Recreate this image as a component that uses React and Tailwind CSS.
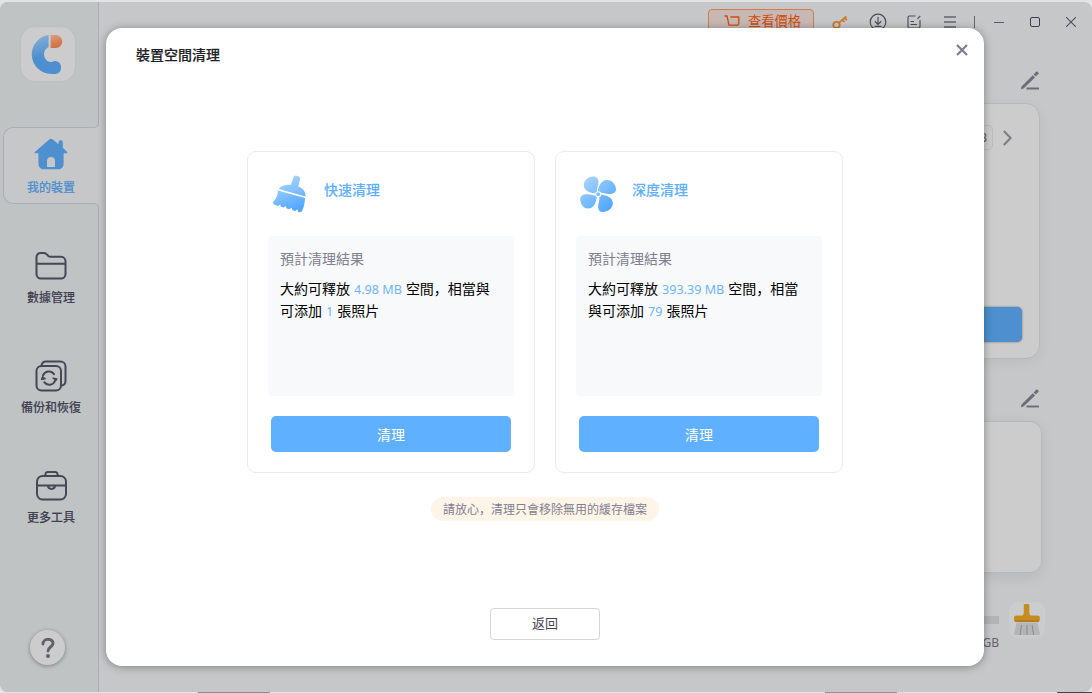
import React from 'react';

const LogoIcon = () => (
  <svg width="54" height="54" viewBox="0 0 54 54">
    <defs>
      <linearGradient id="logoBlue" x1="0" y1="0" x2="0.2" y2="1">
        <stop offset="0" stopColor="#8cb2d4" />
        <stop offset="0.6" stopColor="#4d8fcf" />
        <stop offset="1" stopColor="#4d8fcf" />
      </linearGradient>
      <linearGradient id="logoOrange" x1="0" y1="0" x2="0.3" y2="1">
        <stop offset="0" stopColor="#dc9d80" />
        <stop offset="1" stopColor="#d0703c" />
      </linearGradient>
    </defs>
    <path d="M27.6 8A19.6 19.6 0 0 0 30 47H34.6A6.6 6.6 0 0 0 34.6 34C32.5 33.6 32 35 29.5 35A7.2 7.2 0 0 1 23 27.6C23 24 25 21 27.6 20.3Z" fill="url(#logoBlue)" />
    <path d="M29.6 8H34.8A6.5 6.5 0 0 1 34.8 21H29.6Z" fill="url(#logoOrange)" />
  </svg>
);

const HomeIcon = () => (
  <svg width="34" height="32" viewBox="0 0 34 32">
    <path d="M15.2 1.5a3 3 0 0 1 3.6 0L24.6 6.3V4.4a2 2 0 0 1 4.2 0v5.4l4.4 4.1a.8.8 0 0 1-.6 1.4H29.6V26a5.2 5.2 0 0 1-5.2 5.2H9.6A5.2 5.2 0 0 1 4.4 26V15.3H1.3a.8.8 0 0 1-.5-1.4Z" fill="#4d8fcf" />
    <path d="M13 29V23a4 4 0 0 1 8 0v6Z" fill="#c6c7c9" />
  </svg>
);

const FolderIcon = () => (
  <svg width="32" height="30" viewBox="0 0 32 30" fill="none" stroke="#474756" strokeWidth="2" strokeLinejoin="round">
    <path d="M1.5 12V6a4 4 0 0 1 4-4h3.2a4 4 0 0 1 2.8 1.1L13.4 5a3 3 0 0 0 2.1.8H26A4.5 4.5 0 0 1 30.5 10.3V23a4.5 4.5 0 0 1-4.5 4.5H6A4.5 4.5 0 0 1 1.5 23ZM1.5 12.7H30.5" />
  </svg>
);

const BackupIcon = () => (
  <svg width="32" height="32" viewBox="0 0 32 32" fill="none" stroke="#474756" strokeWidth="2" strokeLinecap="round" strokeLinejoin="round">
    <rect x="1.5" y="6" width="24.5" height="24.5" rx="5" />
    <path d="M6.5 5.5C7 2.5 8.5 1.5 11 1.5H25.5A5 5 0 0 1 30.5 6.5V20.5C30.5 23.5 29 25.3 26.5 25.5" />
    <path d="M8 15.5A6.3 6.3 0 0 1 19 14.2M20.2 20.5A6.3 6.3 0 0 1 9.2 22.2" />
    <path d="M6.4 19.5L7.6 16.6L10.2 18.8ZM17.9 18L22 18.8L21 20.5Z" fill="#474756" strokeWidth="1.2" />
  </svg>
);

const ToolsIcon = () => (
  <svg width="32" height="30" viewBox="0 0 32 30" fill="none" stroke="#474756" strokeWidth="2" strokeLinejoin="round">
    <rect x="2" y="5" width="29" height="23.5" rx="5.5" />
    <path d="M10 5L10.5 3A2.5 2.5 0 0 1 13 1H20A2.5 2.5 0 0 1 22.5 3L23 5M2 14.5H31M13 14.5C13 19 20 19 20 14.5" />
  </svg>
);

const PencilIcon = () => (
  <svg width="20" height="20" viewBox="0 0 20 20">
    <path d="M.8 18.5L1.5 15.5L12.8 4.2L15 6.4L3.8 17.2ZM13.6 3.4L14.8 2.2L17 4.4L15.8 5.6Z" fill="#6c6c79" />
    <circle cx="16.8" cy="2.3" r="1.7" fill="#6c6c79" />
    <path d="M6.5 17.5H19" stroke="#6c6c79" strokeWidth="1.9" />
  </svg>
);

const BroomIcon = () => (
  <svg width="36" height="38" viewBox="0 0 36 38">
    <defs>
      <linearGradient id="broom" gradientUnits="userSpaceOnUse" x1="12" y1="4" x2="24" y2="34">
        <stop offset="0" stopColor="#a4d3ff" />
        <stop offset="1" stopColor="#55a8ff" />
      </linearGradient>
    </defs>
    <path d="M21.2 2.8C21.7.6 23.5.5 25.5 1C27.7 1.6 28.5 2.7 28 4.7L26.2 11.5C30.5 13 34 16.5 33.5 21.5L6.7 14C9 10.5 14 9.5 19 9.8Z" fill="url(#broom)" />
    <path d="M5.9 15.6L33 23C32.8 28 32 32 30.3 35.5C29.5 37.3 28 37.5 26.3 36.9L25.2 34.2L23.3 36L20.5 35.2L19.6 32.7L17.3 34.3L14.7 33.5L13.7 31L11.5 32.5L8.8 31.7L8.3 29.5L6 30.9C3.5 30.2 1 29.5 1.1 27.5C1.2 25.5 5.5 25 5.8 15.6Z" fill="url(#broom)" />
  </svg>
);

const FanIcon = () => (
  <svg width="38" height="38" viewBox="0.7 0 38 38">
    <defs>
      <linearGradient id="fan" gradientUnits="userSpaceOnUse" x1="6" y1="3" x2="30" y2="34">
        <stop offset="0" stopColor="#a7d4ff" />
        <stop offset="1" stopColor="#51a6ff" />
      </linearGradient>
    </defs>
    <g fill="url(#fan)">
      <path d="M18.5 17C19 12 21.5 5.2 27.5 5C33 4.8 37 10 36.7 14.8C36.3 19 31 19.5 27.5 18.7C24 18 22 17.2 20.5 17.9Z" />
      <path d="M21 19.5C26 20 33.5 22 33.5 28C33.5 33.5 28 37.3 23 37C18.8 36.6 18.3 32 19.2 28.5C20 25 20.5 23 19.7 21.5Z" />
      <path d="M17.5 21.5C17 26.5 15 33.5 9 33.6C3.5 33.6.7 28 1 23.5C1.3 19.3 6.5 18.7 10 19.6C13.5 20.3 15 20.8 16.5 20Z" />
      <path d="M16.5 18.5C11.5 18 4.5 16 4.5 10.2C4.5 4.7 10 1.2 14.5 1.5C18.8 1.9 19.7 6 18.8 9.8C18 13.3 17.2 15 17.8 16.5Z" />
    </g>
    <circle cx="18.9" cy="19.2" r="3" fill="#fff" />
    <circle cx="18.9" cy="19.2" r="1.9" fill="#80bfff" />
  </svg>
);

const BrushIcon = () => (
  <svg width="28" height="34" viewBox="0 0 28 34">
    <path d="M10.8 2Q11 1 12 1H15Q16.2 1 16.3 2V10.5L17.5 12.5H24.5Q26.8 12.5 26.8 14.5V17Q26.5 19 24.5 19H3.5Q1 19 1 17V14.5Q1 12.5 3.5 12.5H9.5L10.8 10.5Z" fill="#c58d20" />
    <path d="M1.5 17.3H26.3L25.5 19H2.5Z" fill="#b67b18" />
    <path d="M3.6 19.5H24.5L27 31Q27 32 26 32H2Q.9 32 1 31Z" fill="#b5b5b6" />
    <path d="M8.5 22L7 32M14 22V32M19 22L20.7 32" stroke="#88898c" strokeWidth="1" />
  </svg>
);

const NavItem = ({ icon, label }) => (
  <div className="h-[110px] flex flex-col items-center">
    <div className="h-[35px] flex items-center">{icon}</div>
    <span className="mt-[5px] text-xs leading-[18px] font-medium text-[#3f3f50] [-webkit-text-stroke:0.1px]">{label}</span>
  </div>
);

const CleanCard = ({ icon, title, lines }) => (
  <div className="w-[288px] h-[322px] rounded-[9px] border border-[#ebebed] px-5 flex flex-col">
    <div className="h-[84px] pl-1 flex items-center">
      <div className="w-[39px] h-[38px]">{icon}</div>
      <h3 className="ml-[13px] mb-[10px] text-sm leading-5 font-medium text-[#5fb0ff] [-webkit-text-stroke:0.1px]">{title}</h3>
    </div>
    <div className="h-40 rounded bg-[#f7f9fb] px-3 pt-[11px]">
      <p className="text-sm leading-[22px] text-[#80808f]">預計清理結果</p>
      <div className="mt-2 text-sm leading-[22px] text-black whitespace-nowrap">
        {lines.map(([before, value, after]) => (
          <p key={value} className="h-[22px]">
            {before}
            <span className="mx-1 text-[12.6px] leading-none text-[#6db5f8] font-['Noto_Sans']">{value}</span>
            {after}
          </p>
        ))}
      </div>
    </div>
    <button className="mt-5 mx-[3px] h-9 rounded-[5px] bg-[#5fb0ff] text-sm text-white">清理</button>
  </div>
);

const cards = [
  {
    title: '快速清理',
    icon: <BroomIcon />,
    lines: [['大約可釋放', '4.98 MB', '空間\uFF0C相當與'], ['可添加', '1', '張照片']],
  },
  {
    title: '深度清理',
    icon: <FanIcon />,
    lines: [['大約可釋放', '393.39 MB', '空間\uFF0C相當'], ['與可添加', '79', '張照片']],
  },
];

const Sidebar = () => (
  <aside className="w-[99px] shrink-0 bg-[#bfc3c4] flex flex-col">
    <div className="h-[120px] border-r border-[#acaeb1] pl-[21px] pt-[25px]">
      <div className="w-[54px] h-[54px] rounded-[14px] bg-[#cccccd] shadow-[0_0_2px_rgba(0,0,0,0.08)]">
        <LogoIcon />
      </div>
    </div>
    <div className="self-end w-[6px] h-[6px] bg-[#c6c7c9]">
      <div className="w-full h-full bg-[#bfc3c4] border-r border-b border-[#acaeb1] rounded-br-[5px]" />
    </div>
    <div className="-mt-px h-[77px] pl-[3px] flex">
      <div className="w-[90px] rounded-l-[10px] border-l border-y border-[#acaeb1] bg-[#c6c7c9] pl-[5px] pt-[10px] flex flex-col items-center">
        <HomeIcon />
        <span className="mt-2 text-xs leading-[18px] font-medium text-[#4d8fcf] whitespace-nowrap [-webkit-text-stroke:0.1px]">我的裝置</span>
      </div>
      <div className="mt-px w-[6px] bg-[#c6c7c9]" />
    </div>
    <div className="-mt-px self-end w-[6px] h-[6px] bg-[#c6c7c9]">
      <div className="w-full h-full bg-[#bfc3c4] border-r border-t border-[#acaeb1] rounded-tr-[5px]" />
    </div>
    <div className="flex-1 border-r border-[#acaeb1] flex flex-col">
      <nav className="pt-[39px] pl-1">
        <NavItem icon={<FolderIcon />} label="數據管理" />
        <NavItem icon={<BackupIcon />} label="備份和恢復" />
        <NavItem icon={<ToolsIcon />} label="更多工具" />
      </nav>
      <div className="mt-auto mb-[27px] ml-[30px] w-[35px] h-[35px] rounded-full bg-[#cccccc] shadow-[0_1px_4px_rgba(0,0,0,0.35)] flex items-center justify-center">
        <svg width="14" height="20" viewBox="0 0 14 20" fill="none" stroke="#61616c" strokeWidth="2.9">
          <path d="M2 6C2-.2 12 0 12 5.3C12 9 7 9 7 13" strokeLinecap="round" />
          <circle cx="7" cy="18" r="2" fill="#61616c" stroke="none" />
        </svg>
      </div>
    </div>
  </aside>
);

const TopBar = () => (
  <header className="h-10 pr-[3px] flex items-center justify-end text-[#4d4d5b]">
    <button className="mr-2 w-[106px] h-[26px] rounded border border-[#d57a4c] bg-[#c8b8b4] flex items-center justify-center gap-2 pb-[3px] pl-[3px] text-[#cf4b0c]">
      <svg width="16" height="14" viewBox="0 0 16 14" fill="none" stroke="currentColor" strokeWidth="1.3">
        <path d="M.5 2H3L5 11.200H13Q14.8 11.2 14.8 9.4V3H6.5" />
      </svg>
      <span className="text-[13.3px] whitespace-nowrap">查看價格</span>
    </button>
    <div className="w-9 flex justify-center">
      <svg width="16" height="16" viewBox="0 0 16 16" fill="none" stroke="#cf7a24" strokeWidth="1.8">
        <circle cx="4.5" cy="11" r="3.2" />
        <path d="M7 8.7L14.3 2.5M10.5 5.8L12.5 8M12.5 4L15 6" />
      </svg>
    </div>
    <div className="ml-0.5 w-9 flex justify-center">
      <svg width="18" height="18" viewBox="0 0 18 18" fill="none" stroke="currentColor" strokeWidth="1.2">
        <circle cx="9" cy="9" r="7.8" />
        <path d="M9 4V11M5.8 8.3L9 11.4L12.2 8.3M5.5 13.3H12.5" />
      </svg>
    </div>
    <div className="w-9 flex justify-center">
      <svg width="14" height="14" viewBox="0 0 14 14" fill="none" stroke="currentColor" strokeWidth="1.2">
        <path d="M8.5 1H2.5Q1 1 1 2.5V11.5Q1 13 2.5 13H11.5Q13 13 13 11.5V5M10.5 3.8L13.3.8M3.5 6.5H7M3.5 9.5H10" />
      </svg>
    </div>
    <div className="w-9 flex justify-center">
      <svg width="12" height="12" viewBox="0 0 12 12" stroke="#646470" strokeWidth="1.4">
        <path d="M0 1H12M0 6H12M0 11H12" />
      </svg>
    </div>
    <div className="w-[13px] flex justify-center">
      <div className="w-px h-3 bg-[#646470]" />
    </div>
    <div className="w-9 flex justify-center">
      <div className="w-[10px] h-px bg-[#5b5b68]" />
    </div>
    <div className="w-9 flex justify-center">
      <div className="w-[10px] h-[10px] rounded-[2px] border border-[#3d3d50]" />
    </div>
    <div className="w-9 flex justify-center">
      <svg width="10" height="10" viewBox="0 0 10 10" stroke="#50505e" strokeWidth="1.1">
        <path d="M0 0L10 10M10 0L0 10" />
      </svg>
    </div>
  </header>
);

const CleanupDialog = () => (
  <div className="absolute left-[106px] top-[28px] w-[878px] h-[638px] rounded-2xl bg-white shadow-[0_1px_8px_rgba(0,0,0,0.35)] flex flex-col items-center">
    <div className="w-full h-[54px] pl-[30px] pr-4 flex items-center justify-between">
      <h2 className="mb-0.5 text-sm font-medium text-[#222226] [-webkit-text-stroke:0.15px]">裝置空間清理</h2>
      <svg className="mb-[10px]" width="12" height="12" viewBox="0 0 12 12" stroke="#7d7d90" strokeWidth="2.2">
        <path d="M1 1L11 11M11 1L1 11" />
      </svg>
    </div>
    <div className="mt-[69px] flex gap-5">
      {cards.map((card) => (
        <CleanCard key={card.title} {...card} />
      ))}
    </div>
    <div className="mt-6 h-6 px-3 rounded-full bg-[#fff4e8] text-xs leading-[23px] text-[#80808f]">
      {'請放心\uFF0C清理只會移除無用的緩存檔案'}
    </div>
    <button className="mt-[87px] w-[110px] h-8 rounded border border-[#d6d6da] pb-0.5 text-[13px] text-[#434356]">返回</button>
  </div>
);

const App = () => {
  return (
    <div
      lang="zh-CN"
      className="relative w-[1092px] h-[693px] overflow-hidden bg-[#e2e3e5] pt-[2px] pb-px font-['Noto_Sans_CJK_SC','Noto_Sans_CJK_TC',sans-serif]"
    >
      <div className="h-[690px] rounded-lg overflow-hidden bg-[#c6c7c9] flex">
        <Sidebar />
        <main className="flex-1 flex flex-col">
          <TopBar />
          <div className="mt-[29px] mr-[52px] flex justify-end">
            <PencilIcon />
          </div>
          <div className="mt-[12px] ml-7 mr-[52px] h-[256px] rounded-[14px] border border-[#b6b9bb] bg-[#cccccc] shadow-[0_4px_14px_rgba(0,0,0,0.05)] flex flex-col items-end justify-between">
            <div className="mt-[21px] mr-[27px] flex items-center gap-[10px]">
              <div className="w-12 h-[25px] rounded-[5px] border border-[#bcbdbe] pr-[5px] text-right text-xs leading-[23px] text-[#5b5b68] font-['Noto_Sans']">GB</div>
              <svg width="9" height="16" viewBox="0 0 9 16" fill="none" stroke="#7c7c81" strokeWidth="2">
                <path d="M.8 1L7.6 8L.8 15" />
              </svg>
            </div>
            <div className="mr-[17px] mb-4 w-[130px] h-[35px] rounded-[5px] bg-[#4d8fcf] shadow-[0_0_2px_rgba(0,0,0,0.5)]" />
          </div>
          <div className="mt-[30px] mr-[52px] flex justify-end">
            <PencilIcon />
          </div>
          <div className="mt-[12px] ml-7 mr-[50px] h-[152px] rounded-[12px] border border-[#b6b9bb] bg-[#cccccc] shadow-[0_4px_14px_rgba(0,0,0,0.08)]" />
          <div className="mt-[29px] ml-7 mr-[47px] flex justify-end gap-[10px]">
            <div className="pt-[14px] flex flex-col items-end">
              <div className="w-[300px] h-2 bg-[#b3b4b5]" />
              <span className="mt-[11px] text-xs leading-4 text-[#62626c] font-['Noto_Sans']">128 GB</span>
            </div>
            <div className="w-9 h-9 rounded-[9px] bg-[#cbccce] flex items-center justify-center">
              <BrushIcon />
            </div>
          </div>
        </main>
      </div>
      <div className="h-px flex justify-between">
        <div className="ml-[198px] w-[72px] bg-[#8a8e8f]" />
        <div className="ml-auto mr-[160px] w-[72px] bg-[#8e9192]" />
        <div className="w-[35px] bg-[#444446]" />
      </div>
      <CleanupDialog />
    </div>
  );
};

export default App;
